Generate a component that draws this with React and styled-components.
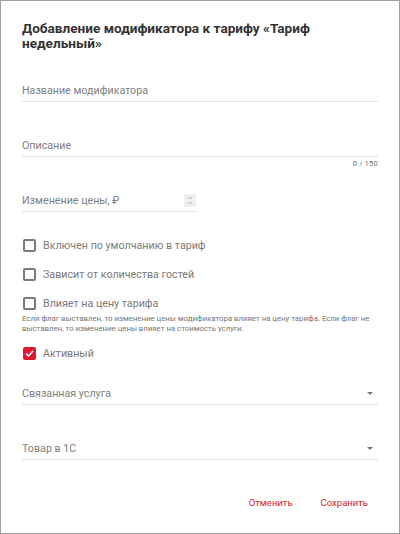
import React from "react";
import styled, { createGlobalStyle } from "styled-components";

const Global = createGlobalStyle`
  html, body { margin: 0; padding: 0; background: #fff; }
  * { box-sizing: border-box; }
`;

const Dialog = styled.div`
  width: 400px;
  height: 534px;
  border: 1px solid #a0a0a0;
  background: #fff;
  padding: 20px 21px 0 21px;
  font-family: Roboto, "Noto Sans", sans-serif;
  display: flex;
  flex-direction: column;
`;

const Title = styled.h2`
  margin: 0;
  font-size: 13.6px;
  line-height: 15px;
  font-weight: 700;
  color: #333;
`;

const Field = styled.div`
  margin-top: ${(p) => p.$mt}px;
  width: ${(p) => p.$w || "100%"};
  height: 28px;
  border-bottom: 1px solid #e2e2e2;
  display: flex;
  align-items: flex-end;
  justify-content: space-between;
  padding-bottom: 4px;
`;

const Label = styled.span`
  font-size: 10.7px;
  line-height: 13px;
  color: #7f7f7f;
`;

const Counter = styled.div`
  align-self: flex-end;
  font-size: 7.6px;
  line-height: 9px;
  color: #777;
  margin-top: 2px;
  letter-spacing: 0.2px;
`;

const Spinner = styled.div`
  width: 12px;
  height: 13px;
  margin-bottom: 0px;
  background: #efefef;
  display: flex;
  align-items: center;
  justify-content: center;
`;

const Arrow = styled.div`
  width: 0;
  height: 0;
  margin-right: 5px;
  margin-bottom: 5px;
  border-left: 3px solid transparent;
  border-right: 3px solid transparent;
  border-top: 3px solid #757575;
`;

const CheckRow = styled.label`
  display: flex;
  align-items: center;
  gap: 7px;
  margin-top: ${(p) => p.$mt}px;
  padding-left: 1px;
  height: 14px;
`;

const Box = styled.span`
  width: 13px;
  height: 13px;
  border-radius: 2px;
  border: ${(p) => (p.$checked ? "none" : "2px solid #7a7a7a")};
  background: ${(p) => (p.$checked ? "#e0182d" : "#fff")};
  display: flex;
  align-items: center;
  justify-content: center;
  flex: none;
`;

const CheckLabel = styled.span`
  font-size: 10.7px;
  color: #7a7a7a;
`;

const Help = styled.p`
  margin: 4px 0 0 0;
  font-size: 7.8px;
  line-height: 10px;
  color: #777;
`;

const Actions = styled.div`
  display: flex;
  justify-content: flex-end;
  gap: 28px;
  margin-top: 37px;
  padding-right: 10px;
`;

const Button = styled.button`
  border: none;
  background: none;
  padding: 0;
  font-family: Roboto, "Noto Sans", sans-serif;
  font-size: 9.5px;
  line-height: 12px;
  color: #e0182d;
  cursor: pointer;
`;

function Check({ checked, label, mt }) {
  return (
    <CheckRow $mt={mt}>
      <Box $checked={checked}>
        {checked && (
          <svg width="9" height="7" viewBox="0 0 9 7">
            <path d="M1 3.5 L3.5 6 L8 1" fill="none" stroke="#fff" strokeWidth="1.6" />
          </svg>
        )}
      </Box>
      <CheckLabel>{label}</CheckLabel>
    </CheckRow>
  );
}

export default function App() {
  return (
    <>
      <Global />
      <Dialog>
        <Title>Добавление модификатора к тарифу «Тариф недельный»</Title>
        <Field $mt={23}>
          <Label>Название модификатора</Label>
        </Field>
        <Field $mt={27}>
          <Label>Описание</Label>
        </Field>
        <Counter>0 / 150</Counter>
        <Field $mt={16} $w="174px">
          <Label>Изменение цены, ₽</Label>
          <Spinner>
            <svg width="6" height="9" viewBox="0 0 6 9">
              <path d="M1 3 L3 1 L5 3 M1 6 L3 8 L5 6" fill="none" stroke="#aaa" strokeWidth="0.8" />
            </svg>
          </Spinner>
        </Field>
        <Check mt={26} label="Включен по умолчанию в тариф" />
        <Check mt={15} label="Зависит от количества гостей" />
        <Check mt={15} label="Влияет на цену тарифа" />
        <Help>
          Если флаг выставлен, то изменение цены модификатора влияет на цену тарифа. Если флаг не
          выставлен, то изменение цены влияет на стоимость услуги.
        </Help>
        <Check mt={12} label="Активный" checked />
        <Field $mt={17}>
          <Label>Связанная услуга</Label>
          <Arrow />
        </Field>
        <Field $mt={27}>
          <Label>Товар в 1С</Label>
          <Arrow />
        </Field>
        <Actions>
          <Button>Отменить</Button>
          <Button>Сохранить</Button>
        </Actions>
      </Dialog>
    </>
  );
}
